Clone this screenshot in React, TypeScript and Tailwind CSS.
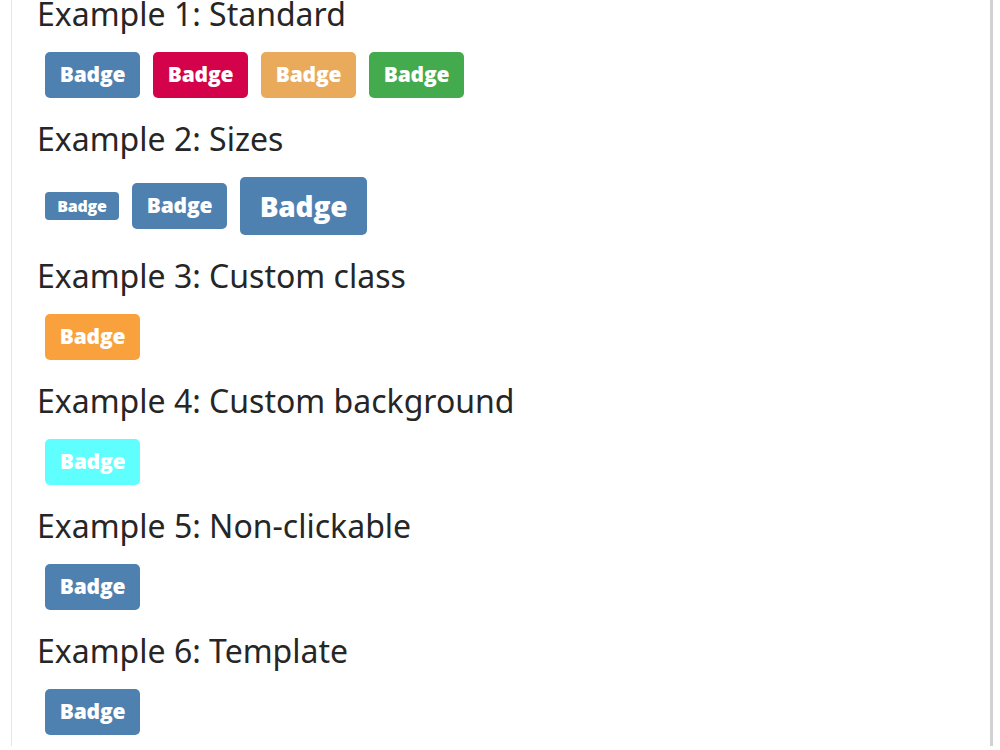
const BLUE = "bg-[#4e80b0]";

type BadgeSize = "sm" | "md" | "lg";

const SIZES: Record<BadgeSize, string> = {
  sm: "h-[28px] w-[74px] text-[16px] rounded-[4px]",
  md: "h-[46px] w-[95px] text-[21px] rounded-[5px]",
  lg: "h-[58px] w-[127px] text-[28px] rounded-[5px]",
};

function Badge({ color = BLUE, size = "md" }: { color?: string; size?: BadgeSize }) {
  return (
    <span
      className={`${color} ${SIZES[size]} inline-flex items-center justify-center font-extrabold tracking-[-0.2px] text-white`}
      style={{ fontFamily: '"Open Sans", sans-serif' }}
    >
      Badge
    </span>
  );
}

function Section({ title, children }: { title: string; children: React.ReactNode }) {
  return (
    <section className="pb-[23px]">
      <h3 className="text-[32px] leading-[36px] text-[#262626]">{title}</h3>
      <div className="mt-[20px] flex items-center gap-[13px] pl-[8px]">{children}</div>
    </section>
  );
}

export default function App() {
  return (
    <div className="h-[750px] overflow-hidden bg-white" style={{ fontFamily: '"Noto Sans", sans-serif' }}>
      <div className="ml-[11px] h-full w-[982px] border-l border-r-[3px] border-l-[#e6e6e6] border-r-[#d2d2d2] pl-[25px]">
        <div className="-mt-[4px]">
          <Section title="Example 1: Standard">
            <Badge />
            <Badge color="bg-[#d3024b]" />
            <Badge color="bg-[#e9aa5b]" />
            <Badge color="bg-[#43aa4d]" />
          </Section>
          <Section title="Example 2: Sizes">
            <Badge size="sm" />
            <Badge />
            <Badge size="lg" />
          </Section>
          <Section title="Example 3: Custom class">
            <Badge color="bg-[#f9a13c]" />
          </Section>
          <Section title="Example 4: Custom background">
            <Badge color="bg-[#5fffff]" />
          </Section>
          <Section title="Example 5: Non-clickable">
            <Badge />
          </Section>
          <Section title="Example 6: Template">
            <Badge />
          </Section>
        </div>
      </div>
    </div>
  );
}
